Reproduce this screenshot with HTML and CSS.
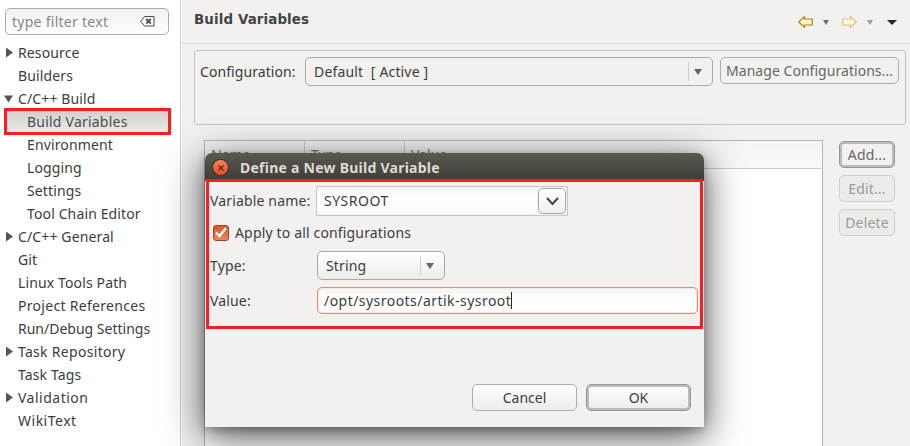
FILE: index.html
```html
<!DOCTYPE html>
<html lang="en">
<head>
<meta charset="utf-8">
<title>Build Variables</title>
<link rel="stylesheet" href="styles.css">
</head>
<body>
<aside class="sidebar">
  <div class="filter"><span>type filter text</span>
    <svg width="15" height="11" viewBox="0 0 15 11" fill="none" stroke="#4d4d4d"><path d="M4.500.500h9.500v9.500H4.500L.700 5.250z"/><path d="M6.300 3l4.500 4.500M10.800 3L6.300 7.500" stroke-width="1.800"/></svg>
  </div>
  <ul class="tree">
    <li><i class="closed"></i><span>Resource</span></li>
    <li><span>Builders</span></li>
    <li><i class="open"></i><span>C/C++ Build</span></li>
    <li class="child selected"><span>Build Variables</span></li>
    <li class="child"><span>Environment</span></li>
    <li class="child"><span>Logging</span></li>
    <li class="child"><span>Settings</span></li>
    <li class="child"><span>Tool Chain Editor</span></li>
    <li><i class="closed"></i><span>C/C++ General</span></li>
    <li><span>Git</span></li>
    <li><span>Linux Tools Path</span></li>
    <li class="wide"><span>Project References</span></li>
    <li class="tight"><span>Run/Debug Settings</span></li>
    <li class="wide"><i class="closed"></i><span>Task Repository</span></li>
    <li><span>Task Tags</span></li>
    <li class="wider"><i class="closed"></i><span>Validation</span></li>
    <li class="wider"><span>WikiText</span></li>
  </ul>
</aside>
<main class="page">
  <header class="page-head">
    <h1>Build Variables</h1>
    <nav class="history">
      <svg width="15" height="12" viewBox="0 0 15 12"><path d="M.800 6L6.500.600v2.400h7.700v6H6.500v2.400z" fill="#fff5c9" stroke="#b57a1b" stroke-width="1.200" stroke-linejoin="round"/></svg>
      <svg class="menu" width="6" height="5" viewBox="0 0 6 5"><path d="M0 0h6L3 5z" fill="#6b6b6b"/></svg>
      <svg width="15" height="12" viewBox="0 0 15 12"><path d="M14.200 6L8.500.600v2.400H.800v6h7.700v2.400z" fill="#fff7e0" stroke="#dfba85" stroke-width="1.200" stroke-linejoin="round"/></svg>
      <svg class="menu" width="6" height="5" viewBox="0 0 6 5"><path d="M0 0h6L3 5z" fill="#999"/></svg>
      <svg width="10" height="5" viewBox="0 0 10 5"><path d="M0 0h10L5 5z" fill="#2b1d42"/></svg>
    </nav>
  </header>
  <section class="config">
    <label>Configuration:</label>
    <div class="combo config-combo"><span>Default&nbsp; [ Active ]</span><b class="drop"></b></div>
    <button class="btn manage">Manage Configurations...</button>
  </section>
  <section class="variables">
    <div class="table">
      <div class="thead"><span>Name</span><span>Type</span><span>Value</span></div>
    </div>
    <div class="actions">
      <button class="btn default">Add...</button>
      <button class="btn disabled">Edit...</button>
      <button class="btn disabled">Delete</button>
    </div>
  </section>
</main>
<section class="dialog">
  <header class="titlebar">
    <span class="close"><svg width="6" height="6" viewBox="0 0 6 6"><path d="M.500.500l5 5M5.500.500l-5 5" stroke="#5a2414" stroke-width="1.200"/></svg></span>
    <h2>Define a New Build Variable</h2>
  </header>
  <div class="form">
    <div class="row name-row"><label class="l-name">Variable name:</label>
      <div class="name-field"><span class="name-text">SYSROOT</span><span class="name-button"><svg width="13" height="9" viewBox="0 0 13 9"><path d="M1 1l5.500 6L12 1" fill="none" stroke="#444" stroke-width="2"/></svg></span></div>
    </div>
    <div class="row check-row"><span class="check"><svg width="12" height="11" viewBox="0 0 12 11"><path d="M1 5.500L4.500 9 11 1" fill="none" stroke="#fff" stroke-width="2.300"/></svg></span><span class="check-label">Apply to all configurations</span></div>
    <div class="row type-row"><label>Type:</label><div class="combo type-combo"><span>String</span><b class="drop"></b></div></div>
    <div class="row value-row"><label>Value:</label><div class="value-field"><span>/opt/sysroots/artik-sysroot</span><i class="caret"></i></div></div>
  </div>
  <footer class="dialog-actions"><button class="btn">Cancel</button><button class="btn default">OK</button></footer>
</section>
</body>
</html>
```
FILE: styles.css
```css
* { box-sizing: border-box; }
body { margin: 0; width: 910px; height: 446px; overflow: hidden; position: relative; display: flex; background: #f2f1f0; color: #3c3c3c; font: 14px/20px "Noto Sans", sans-serif; letter-spacing: 0; }
h1, h2, ul { margin: 0; padding: 0; }
svg { display: block; flex: none; }
span, label, button, h1, h2 { white-space: nowrap; }

.sidebar { width: 182px; flex: none; background: #fff; border-right: 1px solid #fafafa; box-shadow: inset -1px 0 #d2d0ce; }
.filter { display: flex; align-items: center; justify-content: space-between; width: 164px; height: 27px; margin: 8px 0 0 5px; padding: 0 13px 0 6px; border: 1px solid #aaa; border-radius: 5px; background: linear-gradient(#f2f2f2, #fff); color: #858585; letter-spacing: .27px; }
.tree { list-style: none; margin-top: 6px; letter-spacing: .13px; }
.tree li { display: flex; align-items: center; height: 23px; padding-left: 18px; }
.tree .child { padding-left: 27px; }
.tree .tight { letter-spacing: 0; }
.tree .wide { letter-spacing: .3px; }
.tree .wider { letter-spacing: .5px; }
.tree i { flex: none; width: 14px; height: 10px; margin-left: -14px; background: #555; }
.tree .closed { clip-path: polygon(2px 0, 9px 5px, 2px 10px); }
.tree .open { clip-path: polygon(0 2px, 9px 2px, 4.5px 9px); }
.tree .selected { width: 167px; height: 27px; margin: -2px 0 -2px 4px; padding-left: 20px; border: 3px solid #fb1e1a; background: linear-gradient(#d3d1ce, #eaeae9); color: #4c4c4c; letter-spacing: .22px; }

.page { flex: 1; display: flex; flex-direction: column; min-width: 0; }
.page-head { height: 44px; flex: none; display: flex; align-items: center; justify-content: space-between; padding: 0 13px 4px 12px; border-bottom: 1px solid #dcdad8; }
h1 { font: 700 13.4px/20px "DejaVu Sans", sans-serif; letter-spacing: .12px; color: #444; }
.history { display: flex; align-items: center; gap: 10px; margin-top: 5px; }
.history .menu { margin-right: 3px; }
.history svg:last-child { margin-left: 1px; }
.config { display: flex; align-items: flex-start; width: 712px; height: 75px; margin: 6px 0 0 12px; padding: 6px 5px; border: 1px solid #c6c4c2; border-radius: 3px; }
.config label { width: 105px; padding-top: 5px; letter-spacing: .08px; }
.combo { display: flex; align-items: center; justify-content: space-between; height: 29px; border: 1px solid #aaa8a5; border-radius: 5px; padding-left: 8px; background: linear-gradient(#fff, #ececeb); }
.config-combo { width: 408px; background: #f2f1f0; letter-spacing: .16px; }
.drop { width: 24px; height: 19px; border-left: 1px solid #d2d0ce; }
.drop::before { content: ""; display: block; width: 8px; height: 6px; margin: 7px 0 0 5px; background: #666; clip-path: polygon(0 0, 100% 0, 50% 100%); }
.btn { height: 27px; padding: 0; border: 1px solid #b0aeab; border-radius: 5px; background: linear-gradient(#fefefe, #ececeb); color: #3c3c3c; font: inherit; letter-spacing: inherit; }
.manage { width: 179px; margin-left: 7px; background: #f2f1f0; color: #676767; letter-spacing: .04px; }
.default { border-color: #999795; box-shadow: inset 0 0 0 2px #bcbbb9; }
.variables { flex: 1; display: flex; margin: 15px 0 0 22px; }
.table { width: 619px; border: 1px solid #b9b6b2; border-bottom: 0; background: #fff; }
.thead { height: 28px; display: grid; grid-template-columns: 100px 100px 1fr; background: linear-gradient(#f4f4f3, #fafafa); border-bottom: 1px solid #cfcdca; color: #777; }
.thead span { padding: 4px 0 0 6px; border-right: 1px solid #cfcdca; }
.thead span:last-child { border: 0; }
.actions { display: flex; flex-direction: column; gap: 7px; margin: 1px 0 0 16px; width: 56px; letter-spacing: .15px; }
.actions .btn { background: #f2f1f0; color: #666; }
.actions .disabled { background: #ebebea; border-color: #d0cecc; color: #999; }

.dialog { position: absolute; left: 205px; top: 153px; width: 499px; height: 274px; background: #f2f1f0; border-radius: 7px 7px 0 0; box-shadow: 0 9px 38px 1px rgba(0,0,0,.68), 0 3px 8px rgba(0,0,0,.25); }
.titlebar { display: flex; align-items: center; height: 28px; padding: 1px 0 0 8px; border-radius: 7px 7px 0 0; background: linear-gradient(#5a584f, #3e3d38); color: #dfdbd2; }
.close { display: flex; align-items: center; justify-content: center; width: 15px; height: 15px; border-radius: 50%; background: linear-gradient(#f58461, #e34c20); box-shadow: 0 0 0 1px #37322b; }
h2 { margin-left: 12px; font-size: 14px; font-weight: 700; letter-spacing: .25px; }
.form { width: 497px; height: 150px; margin: -2px 0 0 1px; padding: 4px 0 0 1px; border: 3px solid #fb1e1a; }
.row { display: flex; align-items: center; }
.row label { width: 107px; letter-spacing: .15px; }
.row .l-name { width: 106px; letter-spacing: .15px; }
.name-field { display: flex; align-items: center; width: 252px; height: 30px; border: 1px solid #c9c7c5; }
.name-text { width: 220px; height: 26px; padding: 3px 7px; border-radius: 5px; background: linear-gradient(#f5f5f5, #fff 40%, #fafafa); letter-spacing: .5px; }
.name-button { display: flex; align-items: center; justify-content: center; width: 28px; height: 26px; margin-left: 1px; border: 1px solid #aaa8a5; border-radius: 5px; background: linear-gradient(#fff, #f0f0ef); }
.check-row { height: 35px; padding: 0 0 2px 3px; }
.check { display: flex; align-items: center; justify-content: center; width: 16px; height: 16px; border: 1px solid #a24224; border-radius: 3px; background: linear-gradient(#d85a2b, #e98760); }
.check-label { margin-left: 6px; letter-spacing: .16px; }
.type-combo { width: 128px; letter-spacing: .15px; }
.value-row { margin-top: 7px; }
.value-field { display: flex; align-items: center; width: 381px; height: 27px; padding-left: 6px; border: 1px solid #e68b67; border-radius: 5px; background: linear-gradient(#f5f5f5, #fff 40%); box-shadow: inset 0 0 0 1px #fbe9e2; letter-spacing: .46px; }
.caret { width: 1px; height: 17px; background: #222; }
.dialog-actions { display: flex; justify-content: flex-end; gap: 9px; margin-top: 55px; padding-right: 13px; }
.dialog-actions .btn { width: 105px; }
```
